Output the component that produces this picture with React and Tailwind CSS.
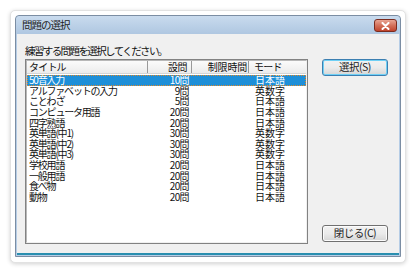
import React from "react";

const rows = [
  ["50音入力", "10問", "", "日本語"],
  ["アルファベットの入力", "9問", "", "英数字"],
  ["ことわざ", "5問", "", "日本語"],
  ["コンピュータ用語", "20問", "", "日本語"],
  ["四字熟語", "20問", "", "日本語"],
  ["英単語(中1)", "30問", "", "英数字"],
  ["英単語(中2)", "30問", "", "英数字"],
  ["英単語(中3)", "30問", "", "英数字"],
  ["学校用語", "20問", "", "日本語"],
  ["一般用語", "20問", "", "日本語"],
  ["食べ物", "20問", "", "日本語"],
  ["動物", "20問", "", "日本語"],
];

function Button({ children, primary }) {
  return (
    <div
      className={
        "w-[66px] h-[17px] rounded-[3px] border flex items-center justify-center text-[10.5px] leading-none tracking-[-0.5px] text-[#222] bg-gradient-to-b from-[#f2f2f2] via-[#ebebeb] to-[#d6d6d6] " +
        (primary
          ? "border-[#3c7fb1] shadow-[inset_0_0_0_1px_#6fd0f5]"
          : "border-[#707070] shadow-[inset_0_0_0_1px_#fcfcfc]")
      }
    >
      {children}
    </div>
  );
}

export default function App() {
  return (
    <div
      className="w-[418px] h-[273px] bg-white pt-[10px] pl-[10px]"
      style={{ fontFamily: '"Noto Sans CJK JP", "Noto Sans", sans-serif' }}
    >
      {/* outer card */}
      <div className="w-[396px] h-[253px] rounded-[5px] bg-white border border-[#e2e2e2] shadow-[0_1px_4px_rgba(0,0,0,0.18)] pt-[4px] pl-[4px]">
        {/* window */}
        <div className="w-[386px] h-[242px] flex flex-col border border-[#7b8da3] rounded-t-[4px] bg-[#b6cde6]">
          {/* title bar */}
          <div className="h-[18px] flex items-center justify-between pl-[6px] pr-[3px] bg-gradient-to-b from-[#c9dbee] to-[#afc7e1] rounded-t-[4px]">
            <span className="text-[10.5px] leading-none text-[#1e1e1e] tracking-[-1px]">問題の選択</span>
            <div className="w-[23px] h-[13px] mt-[1px] rounded-[3px] border border-[#7a2b1f] bg-gradient-to-b from-[#e8a493] via-[#d3705a] to-[#c0432c] flex items-center justify-center">
              <svg width="9" height="8" viewBox="0 0 9 8">
                <path d="M1.5 1 L7.5 7 M7.5 1 L1.5 7" stroke="#fff" strokeWidth="2" strokeLinecap="round" />
              </svg>
            </div>
          </div>
          {/* client */}
          <div className="flex-1 mx-[1px] mb-[1px] border-b-[2px] border-[#2a8fb0] bg-[#f0f0f0] flex">
            <div className="flex flex-col pl-[8px] pt-[10px]">
              <div className="h-[14px] flex items-center text-[10.5px] leading-none text-[#111] tracking-[-1.6px]">
                練習する問題を選択してください。
              </div>
              <div className="mt-[1px] w-[283px] h-[185px] border border-[#828282] bg-white">
                <div className="h-full border border-[#b8b8b8] border-r-[#f0f0f0] border-b-[#f0f0f0] overflow-hidden">
                  {/* header */}
                  <div className="flex h-[13px] text-[10px] leading-[12px] text-[#111] bg-gradient-to-b from-[#fbfbfb] to-[#ececec] border-b border-[#d5d5d5]">
                    <div className="w-[121px] pl-[2px] border-r border-[#9a9a9a] tracking-[-0.8px]">タイトル</div>
                    <div className="w-[44px] pr-[4px] text-right border-r border-[#9a9a9a] tracking-[-0.5px]">設問</div>
                    <div className="w-[57px] pr-[1px] text-right border-r border-[#9a9a9a] tracking-[-0.2px]">制限時間</div>
                    <div className="flex-1 pl-[5px] tracking-[-0.8px]">モード</div>
                  </div>
                  {/* rows */}
                  <div className="pt-[1px]">
                    {rows.map((r, i) => (
                      <div
                        key={i}
                        className={
                          "flex h-[10.65px] text-[10px] leading-[10.65px] " +
                          (i === 0
                            ? "bg-[#1e8fd8] text-white outline outline-1 outline-dotted outline-[#e08a2a] -outline-offset-1"
                            : "text-[#111]")
                        }
                      >
                        <div className="w-[121px] pl-[2px] whitespace-nowrap tracking-[-1.2px]">{r[0]}</div>
                        <div className="w-[44px] pr-[3px] text-right tracking-[-0.6px]">{r[1]}</div>
                        <div className="w-[57px]">{r[2]}</div>
                        <div className="flex-1 pl-[6px] tracking-[0px]">{r[3]}</div>
                      </div>
                    ))}
                  </div>
                </div>
              </div>
            </div>
            <div className="ml-[14px] flex flex-col justify-between pt-[25px] pb-[11px]">
              <Button primary>選択(S)</Button>
              <Button>閉じる(C)</Button>
            </div>
          </div>
        </div>
      </div>
    </div>
  );
}
